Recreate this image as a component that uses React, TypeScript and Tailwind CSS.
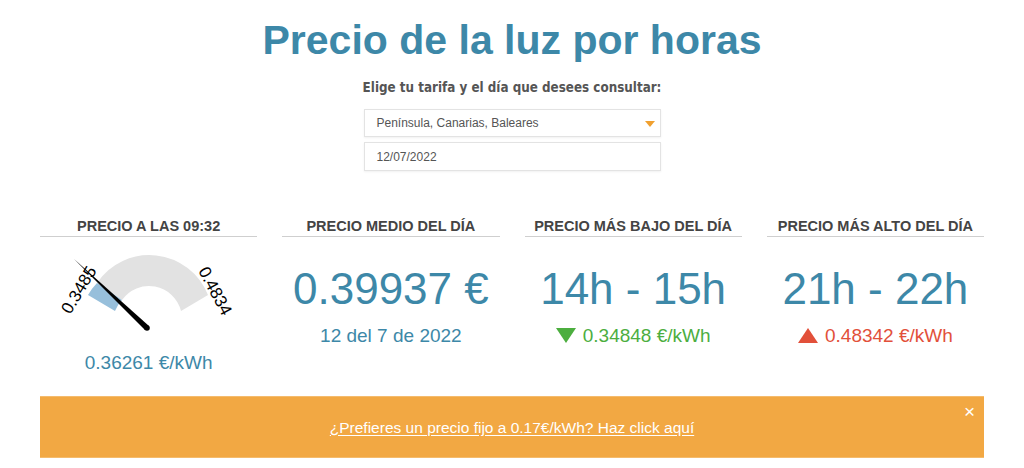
import React from 'react'

const blue = 'text-[#3d88a8]'

function Gauge() {
  return (
    <svg width="218" height="100" viewBox="0 0 218 100" className="block">
      <path d="M57 41 A63 63 0 0 1 168 53 L141 69 A33 33 0 0 0 82 58 Z" fill="#e2e2e2" />
      <path d="M48 53 A63 63 0 0 1 57 41 L82 58 A33 33 0 0 0 75 69 Z" fill="#97bfdb" />
      <polygon points="34,17 109,84 105,88" fill="#000" />
      <circle cx="107" cy="86" r="2.8" fill="#000" />
      <text
        x="39"
        y="48"
        fontSize="17"
        fontFamily="'Liberation Sans', Arial, sans-serif"
        textAnchor="middle"
        dominantBaseline="central"
        transform="rotate(-59 39 48)"
        fill="#000"
      >
        0.3485
      </text>
      <text
        x="175"
        y="49"
        fontSize="17"
        fontFamily="'Liberation Sans', Arial, sans-serif"
        textAnchor="middle"
        dominantBaseline="central"
        transform="rotate(62 175 49)"
        fill="#000"
      >
        0.4834
      </text>
    </svg>
  )
}

function Header({ children }: { children: React.ReactNode }) {
  return (
    <div className="border-b border-[#cfcfcf] pb-[2px] text-center text-[14.5px] leading-[15px] font-bold text-[#444]">
      {children}
    </div>
  )
}

export default function App() {
  return (
    <div className="w-[1024px] h-[468px] overflow-hidden bg-white font-['Liberation_Sans',Arial,sans-serif]">
      <h1 className={`pt-[20px] text-center text-[41px] leading-none font-bold ${blue}`}>
        Precio de la luz por horas
      </h1>
      <p className="mt-[20px] text-center text-[13.3px] leading-none font-bold text-[#555] font-['DejaVu_Sans_Condensed','DejaVu_Sans',sans-serif]">
        Elige tu tarifa y el día que desees consultar:
      </p>
      <div className="mx-auto mt-[15px] flex w-[297px] flex-col gap-[5px]">
        <div className="relative flex h-[28px] items-center border border-[#e3e3e3] bg-white pl-[12px] text-[12px] text-[#555] shadow-[0_1px_2px_rgba(0,0,0,0.06)]">
          Península, Canarias, Baleares
          <span className="absolute right-[5px] top-[11px] h-0 w-0 border-x-[5px] border-t-[6px] border-x-transparent border-t-[#f0a030]" />
        </div>
        <div className="flex h-[29px] items-center border border-[#e3e3e3] bg-white pl-[12px] text-[12px] text-[#555] shadow-[0_1px_2px_rgba(0,0,0,0.06)]">
          12/07/2022
        </div>
      </div>

      <div className="mx-[40px] mt-[48px] grid grid-cols-4 gap-[25px]">
        <div>
          <Header>PRECIO A LAS 09:32</Header>
          <div className="mt-[5px]">
            <Gauge />
          </div>
          <div className={`mt-[11px] text-center text-[19px] leading-none ${blue}`}>0.36261 €/kWh</div>
        </div>
        <div>
          <Header>PRECIO MEDIO DEL DÍA</Header>
          <div className={`mt-[30px] text-center text-[44px] leading-none ${blue}`}>0.39937 €</div>
          <div className={`mt-[15px] text-center text-[19px] leading-none ${blue}`}>12 del 7 de 2022</div>
        </div>
        <div>
          <Header>PRECIO MÁS BAJO DEL DÍA</Header>
          <div className={`mt-[30px] text-center text-[44px] leading-none ${blue}`}>14h - 15h</div>
          <div className="mt-[15px] flex items-center justify-center gap-[7px] text-[19px] leading-none text-[#4cae3f]">
            <span className="h-0 w-0 border-x-[10px] border-t-[15px] border-x-transparent border-t-[#4cae3f]" />
            0.34848 €/kWh
          </div>
        </div>
        <div>
          <Header>PRECIO MÁS ALTO DEL DÍA</Header>
          <div className={`mt-[30px] text-center text-[44px] leading-none ${blue}`}>21h - 22h</div>
          <div className="mt-[15px] flex items-center justify-center gap-[7px] text-[19px] leading-none text-[#e2503a]">
            <span className="h-0 w-0 border-x-[10px] border-b-[15px] border-x-transparent border-b-[#e2503a]" />
            0.48342 €/kWh
          </div>
        </div>
      </div>

      <div className="relative mx-[40px] mt-[24px] flex h-[62px] items-center justify-center border-y border-[#f5bb6c] bg-[#f2a843]">
        <a className="text-[15.5px] text-white underline underline-offset-2">
          ¿Prefieres un precio fijo a 0.17€/kWh? Haz click aquí
        </a>
        <span className="absolute right-[9px] top-[5px] text-[19px] leading-none text-white">×</span>
      </div>
    </div>
  )
}
